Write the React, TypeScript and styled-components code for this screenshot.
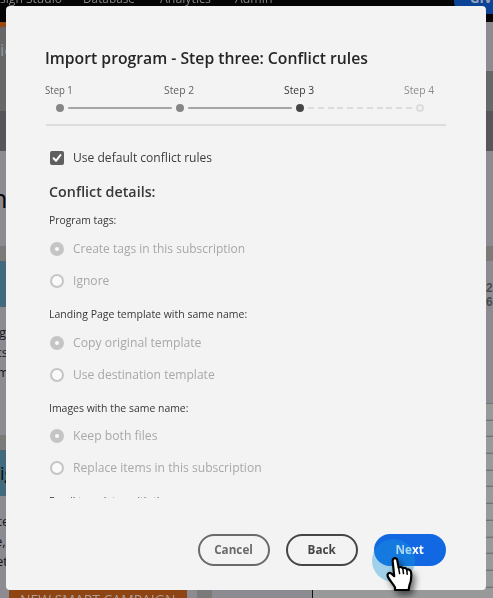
import React from 'react';
import styled, { createGlobalStyle } from 'styled-components';

const GlobalStyle = createGlobalStyle`
  * { box-sizing: border-box; }
  html, body { margin: 0; overflow: hidden; }
  body { font-family: "Open Sans", "Noto Sans", sans-serif; }
`;

const Viewport = styled.div`
  position: relative;
  width: 493px;
  height: 598px;
  overflow: hidden;
  background: #8c8b91;
`;

/* Text is set slightly condensed; $fit is the horizontal ratio. */
const Text = styled.span<{ $fit?: number }>`
  display: inline-block;
  white-space: nowrap;
  transform: scaleX(${(p) => p.$fit ?? 0.925});
  transform-origin: left center;
`;

/* ---------- dimmed page behind the dialog ---------- */
const TopBar = styled.header`
  display: flex;
  height: 22px;
  background: #050505;
  color: #858585;
  font-size: 13px;
  line-height: 16px;
`;
const NavItem = styled.span<{ $width: number }>`
  flex: none;
  width: ${(p) => p.$width}px;
  height: 22px;
  margin-top: -10px;
`;
const FeedbackButton = styled.div`
  flex: none;
  width: 100px;
  height: 26px;
  margin-top: -12px;
  padding: 1px 0 0 16px;
  border-radius: 13px;
  background: #0c4397;
  color: #9aa6bd;
  font-size: 13px;
  font-weight: 700;
  line-height: 18px;
`;
const Columns = styled.div`
  display: grid;
  grid-template-columns: 246px 1fr;
  height: 89px;
`;
const Band = styled.div<{ $height: number; $color: string }>`
  height: ${(p) => p.$height}px;
  background: ${(p) => p.$color};
`;
const SectionTitle = styled(Band)`
  padding-top: 11px;
  color: #96969a;
  font-size: 17px;
  line-height: 24px;
`;
const PageName = styled.div`
  height: 95px;
  margin-left: -8px;
  padding-top: 29px;
  color: #050506;
  font-size: 25px;
  line-height: 36px;
`;
const Body = styled.div`
  display: grid;
  grid-template-columns: 197px 15px 1fr;
  height: 337px;
`;
const CardHeading = styled.div`
  height: 46px;
  padding: 8px 0 0 0;
  background: #426a7c;
  color: #060a0c;
  font-size: 18px;
  line-height: 30px;
`;
const CardText = styled.div<{ $height: number }>`
  height: ${(p) => p.$height}px;
  padding-top: 15px;
  color: #18181a;
  font-size: 13px;
  line-height: 20px;
`;
const TextLine = styled.div<{ $shift: number }>`
  height: 20px;
  margin-left: ${(p) => p.$shift}px;
`;
const CampaignButton = styled.div`
  width: 178px;
  height: 28px;
  margin-left: 9px;
  padding-left: 11px;
  background: #8f4513;
  color: #aaa09a;
  font-size: 14px;
  line-height: 20px;
`;
const Gutter = styled.div`
  background: #7b7a78;
`;
const Report = styled.div`
  display: grid;
  grid-template-columns: 101px 1fr;
  grid-template-rows: 142px 195px;
`;
const ReportHead = styled.div`
  grid-column: 1 / 3;
  padding: 20px 0 0 274px;
  color: #4b4b4e;
  font: 700 12px/14px "Liberation Sans", sans-serif;
`;
const ReportSide = styled.div`
  border-right: 1px solid #111;
`;
const Ruled = styled.div`
  background: repeating-linear-gradient(#737473 0 1px, #989a99 1px 15.7px, #8b8c8b 15.7px 16.7px);
`;

/* ---------- dialog ---------- */
const Dialog = styled.main`
  position: absolute;
  left: 6px;
  top: 6px;
  display: flex;
  flex-direction: column;
  width: 480px;
  height: 584px;
  padding: 42px 40px 24px;
  border-radius: 4px;
  background: #f3f3f3;
`;
const Title = styled.h1`
  margin: 0 0 12px -0.6px;
  height: 20px;
  color: #262626;
  font-size: 17px;
  font-weight: 600;
  line-height: 20px;
`;
const Stepper = styled.div`
  display: grid;
  grid-template-columns: repeat(3, 120px) 40px;
  height: 46px;
  border-bottom: 2px solid #dcdcdc;
`;
const Step = styled.div<{ $color: string }>`
  color: ${(p) => p.$color};
  font-size: 11px;
  line-height: 20px;
  white-space: nowrap;
`;
const StepLabel = styled.div<{ $indent: number }>`
  height: 20px;
  margin-left: ${(p) => p.$indent}px;
`;
const Track = styled.div`
  display: flex;
  align-items: center;
  gap: 4px;
  height: 16px;
  padding-left: 10px;
`;
const Dot = styled.i<{ $color: string; $open?: boolean }>`
  flex: none;
  width: 8px;
  height: 8px;
  border: 2px solid ${(p) => p.$color};
  border-radius: 50%;
  background: ${(p) => (p.$open ? 'transparent' : p.$color)};
`;
const Connector = styled.i<{ $dashed?: boolean }>`
  flex: none;
  width: 104px;
  height: 2px;
  border-radius: 1px;
  background: ${(p) =>
    p.$dashed ? 'repeating-linear-gradient(90deg, #dcdcdc 0 6px, transparent 6px 9.8px)' : '#a6a6a6'};
`;
const Scroll = styled.section`
  height: 372px;
  padding: 22px 0 0 4px;
  overflow: hidden;
`;
const OptionRow = styled.label<{ $disabled?: boolean }>`
  display: flex;
  align-items: center;
  gap: 9.4px;
  height: 20px;
  color: ${(p) => (p.$disabled ? '#a8a8a8' : '#3c3c3c')};
  font-size: 13px;
  line-height: 18px;
`;
const OptionLabel = styled.span`
  height: 20px;
`;
const Checkbox = styled.span`
  display: grid;
  place-items: center;
  width: 14px;
  height: 14px;
  border-radius: 2px;
  background: #5f5f5f;
`;
const Radio = styled.span<{ $on?: boolean }>`
  width: 14px;
  height: 14px;
  border: ${(p) => (p.$on ? 5 : 2)}px solid #c5c5c5;
  border-radius: 50%;
  background: #fafafa;
`;
const Heading = styled.h2`
  margin: 13px 0 10px -0.6px;
  height: 20px;
  color: #383838;
  font-size: 15px;
  font-weight: 600;
  line-height: 20px;
`;
const Group = styled.div`
  display: grid;
  grid-template-rows: 20px 20px 20px;
  row-gap: 12px;
  height: 93.8px;
`;
const GroupLabel = styled.div`
  margin: -1px 0 0 -0.6px;
  color: #383838;
  font-size: 11px;
  line-height: 20px;
  height: 20px;
`;
const Choices = styled.div`
  display: grid;
  grid-auto-rows: 20px;
  row-gap: 12px;
  margin-top: -4.2px;
`;
const Footer = styled.footer`
  display: flex;
  justify-content: flex-end;
  gap: 16px;
  margin-top: auto;
`;
const Button = styled.button<{ $tone: string; $solid?: boolean }>`
  display: flex;
  justify-content: center;
  width: 72px;
  height: 32px;
  padding: 0;
  border: 2px solid ${(p) => p.$tone};
  border-radius: 16px;
  background: ${(p) => (p.$solid ? p.$tone : 'transparent')};
  color: ${(p) => (p.$solid ? '#fff' : p.$tone)};
  font: 700 13px/26px "Open Sans", sans-serif;
`;
const ButtonText = styled(Text)`
  transform-origin: center;
`;
const ClickHalo = styled.div`
  position: absolute;
  left: 372px;
  top: 539px;
  width: 43px;
  height: 43px;
  border-radius: 50%;
  background: rgba(27, 152, 220, 0.38);
`;
const Pointer = styled.svg`
  position: absolute;
  left: 382px;
  top: 553px;
  filter: drop-shadow(3px 4px 3px rgba(0, 0, 0, 0.55));
`;

const steps = [
  { label: 'Step 1', fit: 0.87, text: '#626262', dot: '#868686', indent: -0.6 },
  { label: 'Step 2', fit: 0.94, text: '#626262', dot: '#868686', indent: -1.6 },
  { label: 'Step 3', fit: 0.94, text: '#383838', dot: '#464646', indent: -1.6 },
  { label: 'Step 4', fit: 0.94, text: '#8c8c8c', dot: '#dcdcdc', indent: -1.6 },
];

const groups = [
  {
    label: 'Program tags:',
    fit: 0.942,
    options: [
      { label: 'Create tags in this subscription', fit: 0.922 },
      { label: 'Ignore', fit: 0.93 },
    ],
  },
  {
    label: 'Landing Page template with same name:',
    fit: 0.954,
    options: [
      { label: 'Copy original template', fit: 0.939 },
      { label: 'Use destination template', fit: 0.93 },
    ],
  },
  {
    label: 'Images with the same name:',
    fit: 0.95,
    options: [
      { label: 'Keep both files', fit: 0.938 },
      { label: 'Replace items in this subscription', fit: 0.932 },
    ],
  },
  { label: 'Email templates with the same name:', fit: 0.947, options: [] },
];

function Background() {
  return (
    <>
      <TopBar>
        <NavItem $width={83}><Text $fit={0.93}>sign Studio</Text></NavItem>
        <NavItem $width={77}><Text $fit={0.909}>Database</Text></NavItem>
        <NavItem $width={75}><Text $fit={0.95}>Analytics</Text></NavItem>
        <NavItem $width={219}><Text $fit={0.95}>Admin</Text></NavItem>
        <FeedbackButton>GIVE</FeedbackButton>
      </TopBar>
      <Columns>
        <div>
          <Band $height={5} $color="#97490f" />
          <SectionTitle $height={84} $color="#666769">ic</SectionTitle>
        </div>
        <div>
          <Band $height={49} $color="#8c8b91" />
          <Band $height={40} $color="#666769" />
        </div>
      </Columns>
      <Band $height={40} $color="#55555a" />
      <PageName>n</PageName>
      <Band $height={15} $color="#7b7a78" />
      <Body>
        <div>
          <CardHeading />
          <CardText $height={128}>
            <TextLine $shift={-1}>g</TextLine>
            <TextLine $shift={-3}>ts</TextLine>
            <TextLine $shift={-3}>m</TextLine>
          </CardText>
          <Band $height={15} $color="#7b7a78" />
          <CardHeading>ig</CardHeading>
          <CardText $height={94}>
            <TextLine $shift={-6}>ite</TextLine>
            <TextLine $shift={-5}>e,</TextLine>
            <TextLine $shift={-4}>et</TextLine>
          </CardText>
          <CampaignButton><Text $fit={0.995}>NEW SMART CAMPAIGN</Text></CampaignButton>
        </div>
        <Gutter />
        <Report>
          <ReportHead>
            <div>2</div>
            <div>6</div>
          </ReportHead>
          <ReportSide />
          <Ruled />
        </Report>
      </Body>
    </>
  );
}

export default function App() {
  return (
    <Viewport>
      <GlobalStyle />
      <Background />
      <Dialog>
        <Title><Text $fit={0.926}>Import program - Step three: Conflict rules</Text></Title>
        <Stepper>
          {steps.map((s, i) => (
            <Step key={s.label} $color={s.text}>
              <StepLabel $indent={s.indent}><Text $fit={s.fit}>{s.label}</Text></StepLabel>
              <Track>
                <Dot $color={s.dot} $open={i === 3} />
                {i < 3 && <Connector $dashed={i === 2} />}
              </Track>
            </Step>
          ))}
        </Stepper>
        <Scroll>
          <OptionRow>
            <Checkbox>
              <svg width="10" height="10" viewBox="0 0 10 10">
                <path d="M1.6 5.3 4 7.8 8.5 2" fill="none" stroke="#fff" strokeWidth="2" strokeLinecap="round" strokeLinejoin="round" />
              </svg>
            </Checkbox>
            <OptionLabel><Text $fit={0.929}>Use default conflict rules</Text></OptionLabel>
          </OptionRow>
          <Heading><Text $fit={0.954}>Conflict details:</Text></Heading>
          {groups.map((g) => (
            <Group key={g.label}>
              <GroupLabel><Text $fit={g.fit}>{g.label}</Text></GroupLabel>
              <Choices>
                {g.options.map((o, i) => (
                  <OptionRow key={o.label} $disabled>
                    <Radio $on={i === 0} />
                    <OptionLabel><Text $fit={o.fit}>{o.label}</Text></OptionLabel>
                  </OptionRow>
                ))}
              </Choices>
            </Group>
          ))}
        </Scroll>
        <Footer>
          <Button $tone="#6a6a6a"><ButtonText $fit={0.9}>Cancel</ButtonText></Button>
          <Button $tone="#454545"><ButtonText $fit={0.9}>Back</ButtonText></Button>
          <Button $tone="#1268e3" $solid><ButtonText $fit={0.9}>Next</ButtonText></Button>
        </Footer>
      </Dialog>
      <ClickHalo />
      <Pointer width="36" height="42" viewBox="0 0 36 42">
        <path
          d="M13 37V34.5C11.8 31.5 8.6 28.8 6.2 24.4C4.4 20.9 7 18.9 9.6 20.7L12.2 23.2L10.7 8.4C10.4 4.4 14.8 4 15.3 7.4L16.6 14.6C18 13.6 20 13.9 20.8 15.3C22.4 14.5 24.2 15 24.8 16.6C26.8 15.9 28.8 17 29.1 19.4C29.6 24.2 29 28.6 27.4 32.4L26.6 37Z"
          fill="#fff"
          stroke="#000"
          strokeWidth="2.2"
          strokeLinejoin="round"
        />
        <path d="M16.6 14.6 17.6 20.6M20.8 15.3 21.5 20.6M24.8 16.6 25.2 21.2" fill="none" stroke="#000" strokeWidth="1.5" strokeLinecap="round" />
      </Pointer>
    </Viewport>
  );
}
